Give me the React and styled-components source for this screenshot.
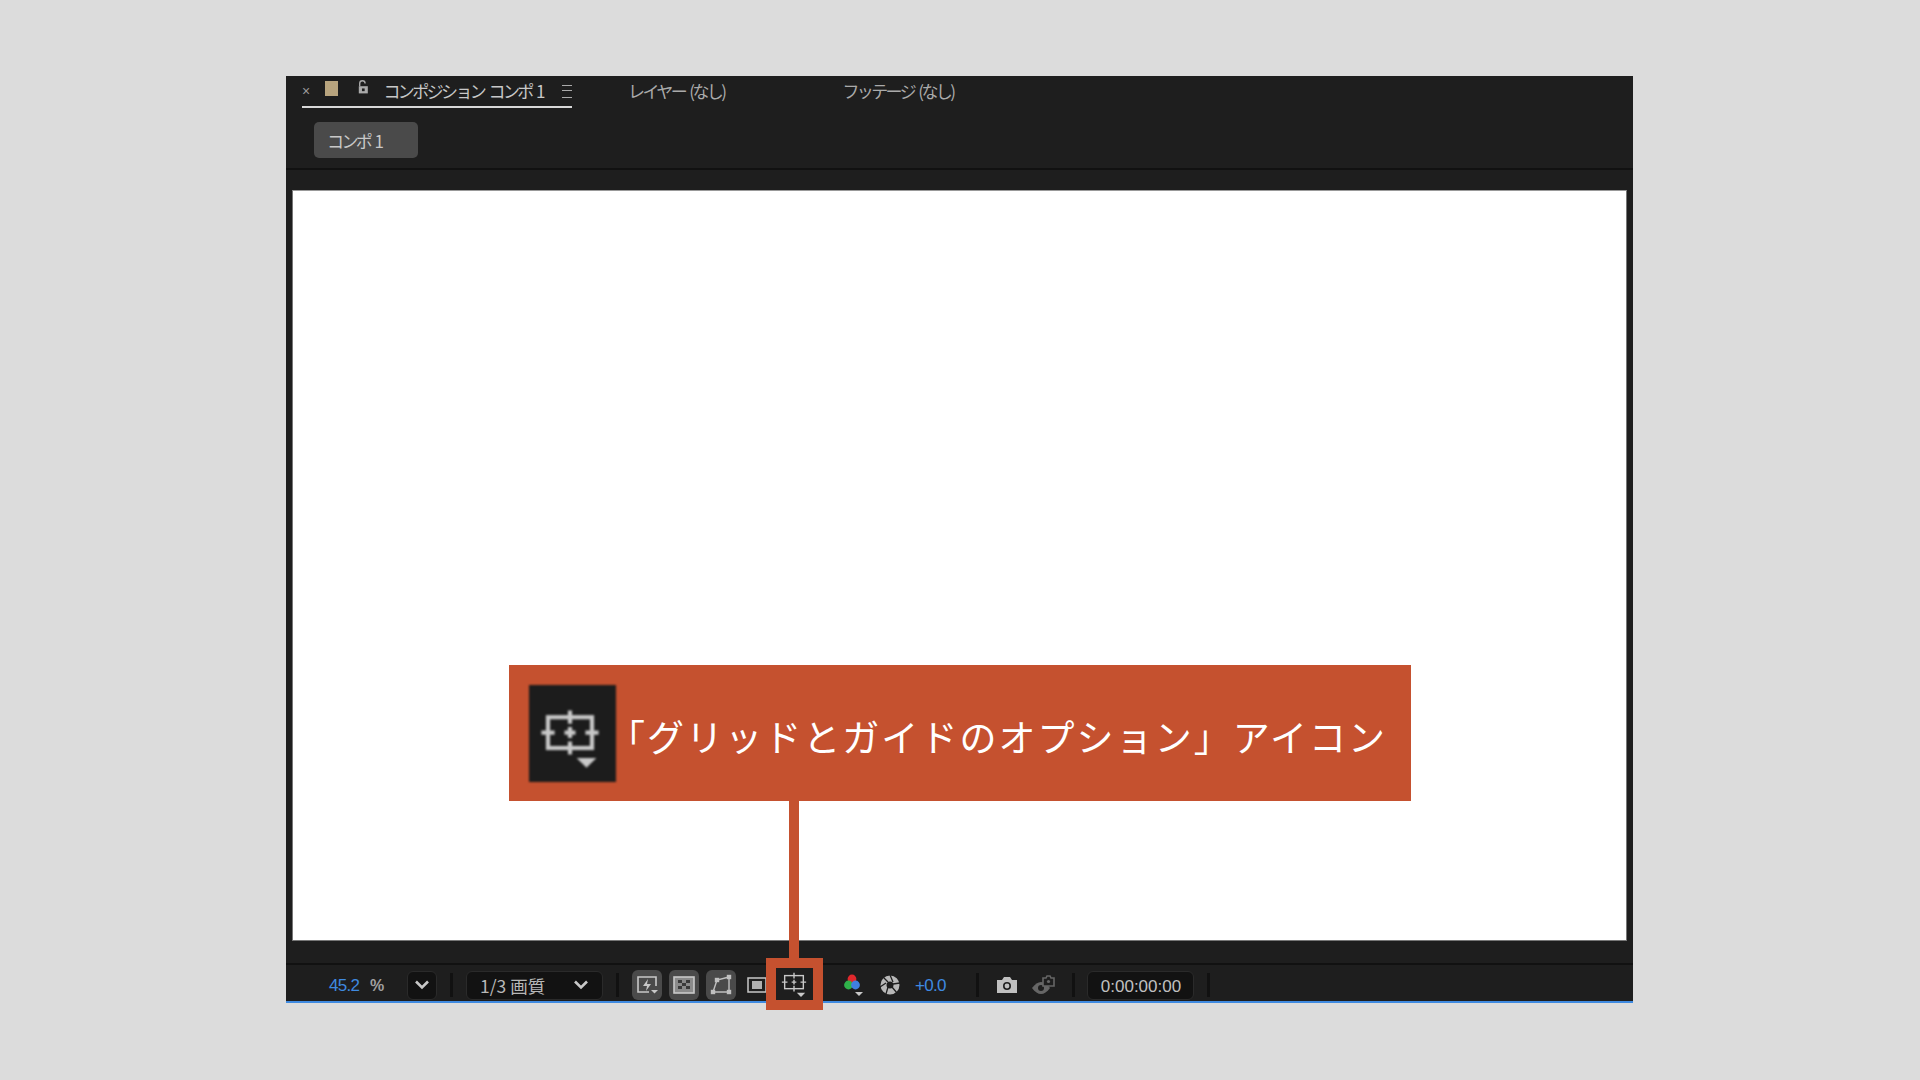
import React from 'react';
import styled, { createGlobalStyle } from 'styled-components';

const GlobalStyle = createGlobalStyle`
  html, body {
    margin: 0;
    padding: 0;
    background: #dcdcdc;
  }
  body {
    font-family: "Liberation Sans", "Noto Sans CJK JP", sans-serif;
  }
`;

const Page = styled.div`
  width: 1920px;
  height: 1080px;
  padding: 76px 287px 0 286px;
  box-sizing: border-box;
  overflow: hidden;
`;

const Panel = styled.div`
  position: relative;
  height: 927px;
  background: #1e1e1e;
  border-bottom: 2px solid #3f8ae0;
  box-sizing: border-box;
  display: flex;
  flex-direction: column;
`;

const TabRow = styled.div`
  height: 36px;
  display: flex;
  align-items: flex-start;
  padding-left: 16px;
`;

const ActiveTab = styled.div`
  width: 270px;
  height: 32px;
  display: flex;
  align-items: center;
  border-bottom: 2px solid #d8d8d8;
  box-sizing: border-box;
  color: #c8c8c8;
`;

const Close = styled.span`
  width: 13px;
  font-size: 14px;
  color: #9a9a9a;
`;

const Swatch = styled.span`
  width: 16px;
  height: 15px;
  margin: -5px 0 0 13px;
  background: #b8a47e;
`;

const TabLabel = styled.span`
  font-family: "Noto Sans CJK JP", sans-serif;
  font-size: 17px;
  letter-spacing: -2.6px;
  word-spacing: 3px;
  white-space: nowrap;
  color: ${(p) => p.$color || '#c8c8c8'};
  margin-left: ${(p) => p.$left || 0}px;
  margin-top: ${(p) => p.$top || 0}px;
`;

const Menu = styled.span`
  width: 13px;
  height: 11px;
  margin-left: 19px;
  border-top: 1px solid #aaa;
  border-bottom: 1px solid #aaa;
  position: relative;
  &::after {
    content: '';
    position: absolute;
    left: 0;
    right: 0;
    top: 4px;
    height: 1px;
    background: #aaa;
  }
`;

const CompRow = styled.div`
  height: 58px;
  padding: 10px 0 0 28px;
  box-sizing: border-box;
  border-bottom: 2px solid #111;
`;

const CompButton = styled.div`
  width: 104px;
  height: 36px;
  background: #4a4a4a;
  border-radius: 5px;
  padding-left: 13px;
  box-sizing: border-box;
  display: flex;
  align-items: center;
  color: #cfcfcf;
`;

const ViewerArea = styled.div`
  flex: 1;
  padding: 20px 6px 22px;
  border-bottom: 2px solid #111;
  display: flex;
`;

const Viewer = styled.div`
  flex: 1;
  background: #fff;
  border: 1px solid #777;
  border-top-color: #999;
`;

const Toolbar = styled.div`
  height: 36px;
  padding-top: 4px;
  box-sizing: border-box;
  display: flex;
  align-items: center;
  flex-shrink: 0;
`;

const Blue = styled.span`
  font-family: "Liberation Sans", sans-serif;
  font-size: 17px;
  letter-spacing: -0.7px;
  color: #3f8ae0;
  padding-top: 1px;
  margin-left: ${(p) => p.$left}px;
  width: ${(p) => p.$width}px;
  white-space: nowrap;
`;

const Percent = styled.span`
  font-size: 16px;
  font-weight: 700;
  color: #a0a0a0;
  padding-top: 1px;
  margin-left: 10px;
  width: 15px;
`;

const DarkBox = styled.div`
  height: 29px;
  background: #121212;
  border: 1px solid #2a2a2a;
  border-radius: 6px;
  box-sizing: border-box;
  display: flex;
  align-items: center;
  color: #b8b8b8;
  flex-shrink: 0;
  margin-left: ${(p) => p.$left}px;
  width: ${(p) => p.$width}px;
  padding: ${(p) => p.$pad || 0};
  justify-content: ${(p) => p.$justify || 'center'};
`;

const QualityText = styled.span`
  font-family: "Noto Sans CJK JP", sans-serif;
  font-size: 17.5px;
  white-space: nowrap;
`;

const Sep = styled.span`
  width: 3px;
  height: 24px;
  background: #111;
  flex-shrink: 0;
  margin-left: ${(p) => p.$left}px;
`;

const IconBtn = styled.div`
  width: 30px;
  height: 30px;
  border-radius: 6px;
  background: ${(p) => (p.$on ? '#4a4a4a' : 'transparent')};
  display: flex;
  align-items: center;
  justify-content: center;
  flex-shrink: 0;
  margin-left: ${(p) => p.$left}px;
`;

const Timecode = styled.div`
  width: 107px;
  height: 29px;
  margin-left: 12px;
  padding: 3px 0 0 1px;
  background: #121212;
  border: 1px solid #2a2a2a;
  border-radius: 6px;
  box-sizing: border-box;
  display: flex;
  align-items: center;
  justify-content: center;
  flex-shrink: 0;
  font-size: 17px;
  color: #c0c0c0;
`;

const Callout = styled.div`
  position: absolute;
  left: 223px;
  top: 589px;
  width: 902px;
  height: 136px;
  background: #c5512f;
  display: flex;
  align-items: center;
  padding-left: 20px;
  box-sizing: border-box;
`;

const CalloutIcon = styled.div`
  width: 87px;
  height: 97px;
  background: #1c1c1c;
  filter: blur(1px);
  flex-shrink: 0;
  display: flex;
  align-items: center;
  justify-content: center;
  padding: 7px 5px 0 0;
  box-sizing: border-box;
`;

const CalloutText = styled.span`
  font-family: "Noto Sans CJK JP", sans-serif;
  font-size: 37px;
  font-weight: 400;
  letter-spacing: 2.05px;
  line-height: 1;
  margin: 6px 0 0 -8px;
  color: #fff;
  white-space: nowrap;
`;

const Leader = styled.div`
  position: absolute;
  left: 503px;
  top: 725px;
  width: 10px;
  height: 160px;
  background: #c5512f;
`;

const Highlight = styled.div`
  position: absolute;
  left: 480px;
  top: 882px;
  width: 57px;
  height: 52px;
  border: 10px solid #c5512f;
  box-sizing: border-box;
  display: flex;
  align-items: center;
  justify-content: center;
  padding-right: 1px;
`;

const GridIcon = ({ size = 30, color = '#c8c8c8', weight = 1.6 }) => (
  <svg width={size} height={size} viewBox="0 0 30 30" fill="none" stroke={color} strokeWidth={weight}>
    <rect x="5" y="6" width="20" height="14" />
    <path d="M15 3v6M15 17v6M2 13h6M22 13h6M12.5 13h5M15 10.5v5" />
    <path d="M18 24.5h9l-4.5 4.5z" fill={color} stroke="none" />
  </svg>
);

const Chevron = ({ color = '#c8c8c8' }) => (
  <svg width="16" height="10" viewBox="0 0 16 10" fill="none" stroke={color} strokeWidth="2.6">
    <path d="M2 1.5l6 6 6-6" />
  </svg>
);

const FastIcon = () => (
  <svg width="24" height="24" viewBox="0 0 24 24" fill="none" stroke="#c8c8c8" strokeWidth="1.6">
    <path d="M14 19H3V4h18v9" />
    <path d="M13 6l-5 7h4l-1 5 5-7h-4z" fill="#c8c8c8" stroke="none" />
    <path d="M16 17h7l-3.5 3.5z" fill="#c8c8c8" stroke="none" />
  </svg>
);

const CheckerIcon = () => (
  <svg width="22" height="18" viewBox="0 0 22 18">
    <rect x="1" y="1" width="20" height="16" fill="#8a8a8a" stroke="#c8c8c8" strokeWidth="1.6" />
    <path d="M5 4h4v3H5zM13 4h4v3h-4zM9 7h4v3H9zM5 10h4v3H5zM13 10h4v3h-4z" fill="#3a3a3a" />
  </svg>
);

const MaskIcon = () => (
  <svg width="22" height="22" viewBox="0 0 22 22" fill="none" stroke="#c0c0c0" strokeWidth="1.4">
    <path d="M3 18L7 6l12-3v15z" />
    <rect x="1.5" y="16.5" width="3" height="3" fill="#c0c0c0" />
    <rect x="17.5" y="16.5" width="3" height="3" fill="#c0c0c0" />
    <rect x="5.5" y="4.5" width="3" height="3" fill="#c0c0c0" />
    <rect x="17.5" y="1.5" width="3" height="3" fill="#c0c0c0" />
  </svg>
);

const SafeIcon = () => (
  <svg width="20" height="16" viewBox="0 0 20 16">
    <rect x="1" y="1" width="18" height="14" fill="none" stroke="#c8c8c8" strokeWidth="1.5" />
    <rect x="5" y="4" width="10" height="8" fill="#b0b0b0" />
  </svg>
);

const ChannelIcon = () => (
  <svg width="22" height="24" viewBox="0 0 22 24">
    <circle cx="8" cy="6" r="4.4" fill="#e0282c" />
    <circle cx="4.5" cy="12" r="4.4" fill="#2fb24a" />
    <circle cx="11.5" cy="12" r="4.4" fill="#3f7fe0" />
    <path d="M11 19h8l-4 4z" fill="#c8c8c8" />
  </svg>
);

const ShutterIcon = () => (
  <svg width="20" height="20" viewBox="0 0 20 20" fill="none">
    <circle cx="10" cy="10" r="6.5" stroke="#b8b8b8" strokeWidth="6" />
    <circle cx="10" cy="10" r="2.6" fill="#1e1e1e" />
    <path d="M10 0l3 7M20 8l-7 1M17 18l-5-6M6 19l2-7M0 12l6-4M3 2l5 5" stroke="#1e1e1e" strokeWidth="1.3" />
  </svg>
);

const CameraIcon = () => (
  <svg width="22" height="18" viewBox="0 0 22 18">
    <path d="M1 4h5l2-3h6l2 3h5v13H1z" fill="#c0c0c0" />
    <circle cx="11" cy="10" r="4" fill="#1e1e1e" />
    <circle cx="11" cy="10" r="2.4" fill="#c0c0c0" />
  </svg>
);

const SnapshotIcon = () => (
  <svg width="24" height="22" viewBox="0 0 24 22" fill="none">
    <path d="M1 14c3-4 6-6 9-6s6 2 9 6c-3 4-6 6-9 6s-6-2-9-6z" fill="#666" />
    <circle cx="10" cy="14" r="3" fill="#1e1e1e" />
    <path d="M12 4h3l1-2h3l1 2h3v8h-11z" fill="#1e1e1e" stroke="#666" strokeWidth="1.6" />
    <circle cx="17.5" cy="7.5" r="1.6" fill="#666" />
  </svg>
);

const LockIcon = () => (
  <svg width="16" height="20" viewBox="0 0 14 18" style={{ margin: '-6px 0 0 19px' }}>
    <path d="M3 7V4a3 3 0 0 1 6 0" fill="none" stroke="#aaa" strokeWidth="1.5" />
    <rect x="2" y="7" width="10" height="8" fill="#aaa" />
    <rect x="5.5" y="9.5" width="3" height="3" fill="#1e1e1e" />
  </svg>
);

export default function App() {
  return (
    <Page>
      <GlobalStyle />
      <Panel>
        <TabRow>
          <ActiveTab>
            <Close>×</Close>
            <Swatch />
            <LockIcon />
            <TabLabel $left={14} $top={-2}>コンポジション コンポ 1</TabLabel>
            <Menu />
          </ActiveTab>
          <TabLabel $left={56} $top={2} $color="#aaa">レイヤー (なし)</TabLabel>
          <TabLabel $left={118} $top={2} $color="#aaa">フッテージ (なし)</TabLabel>
        </TabRow>
        <CompRow>
          <CompButton>
            <TabLabel>コンポ 1</TabLabel>
          </CompButton>
        </CompRow>
        <ViewerArea>
          <Viewer />
        </ViewerArea>
        <Toolbar>
          <Blue $left={43} $width={31}>45.2</Blue>
          <Percent>%</Percent>
          <DarkBox $left={22} $width={30}><Chevron /></DarkBox>
          <Sep $left={13} />
          <DarkBox $left={13} $width={137} $pad="0 13px" $justify="space-between">
            <QualityText>1/3 画質</QualityText>
            <Chevron />
          </DarkBox>
          <Sep $left={13} />
          <IconBtn $on $left={13}><FastIcon /></IconBtn>
          <IconBtn $on $left={7}><CheckerIcon /></IconBtn>
          <IconBtn $on $left={7}><MaskIcon /></IconBtn>
          <IconBtn $left={6}><SafeIcon /></IconBtn>
          <IconBtn $left={68}><ChannelIcon /></IconBtn>
          <IconBtn $left={5}><ShutterIcon /></IconBtn>
          <Blue $left={10} $width={32}>+0.0</Blue>
          <Sep $left={29} />
          <IconBtn $left={13}><CameraIcon /></IconBtn>
          <IconBtn $left={6}><SnapshotIcon /></IconBtn>
          <Sep $left={14} />
          <Timecode>0:00:00:00</Timecode>
          <Sep $left={13} />
        </Toolbar>
        <Callout>
          <CalloutIcon><GridIcon size={66} weight={1.9} /></CalloutIcon>
          <CalloutText>「グリッドとガイドのオプション」アイコン</CalloutText>
        </Callout>
        <Leader />
        <Highlight><GridIcon size={28} color="#c8c8c8" weight={1.5} /></Highlight>
      </Panel>
    </Page>
  );
}
